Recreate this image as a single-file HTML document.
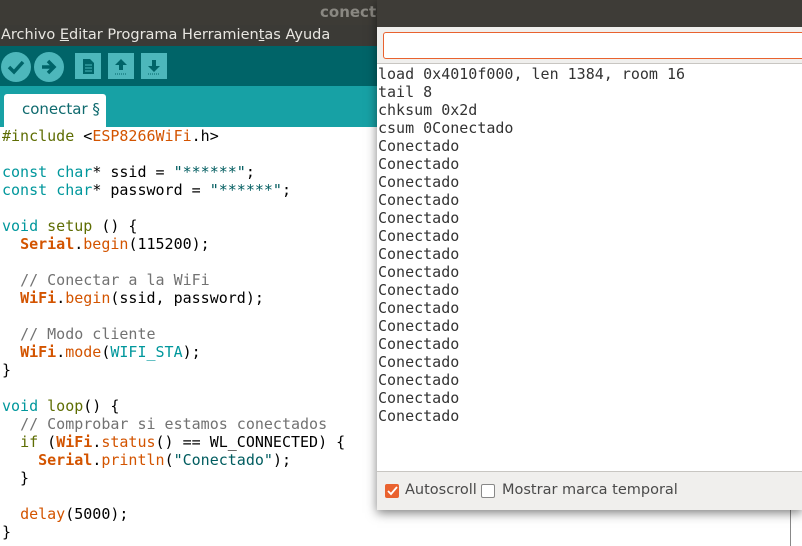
<!DOCTYPE html>
<html><head><meta charset="utf-8"><style>
*{margin:0;padding:0;box-sizing:border-box}
body{width:802px;height:546px;overflow:hidden;background:#fff;position:relative;font-family:"Liberation Sans","DejaVu Sans",sans-serif}
.abs{position:absolute}
#title{left:0;top:0;width:802px;height:25px;background:#3d3b36}
#title span{position:absolute;left:320px;top:3px;color:#8a8882;font-weight:bold;font-size:15px;font-family:"DejaVu Sans",sans-serif}
#menu{left:0;top:25px;width:802px;height:21px;background:#3b3a36;color:#e8e6e1;font-size:14.5px;font-family:"DejaVu Sans",sans-serif;padding-left:1px;line-height:21px;white-space:pre}
#tool{left:0;top:46px;width:802px;height:40px;background:#006468}
#tabs{left:0;top:86px;width:802px;height:41px;background:#17a1a5}
#tab{left:4px;top:94px;width:102px;height:33px;background:#fff;border-radius:3px 3px 0 0;color:#0f6a6e;font-size:15px;padding:6px 0 0 18px;font-family:"DejaVu Sans",sans-serif}
.circ{position:absolute;top:52px;width:30px;height:30px;border-radius:50%;background:#4db7bb}
.sq{position:absolute;top:53px;width:26px;height:26px;background:#4db7bb}
pre{font-family:"DejaVu Sans Mono","Liberation Mono",monospace;font-size:15px;line-height:18px}
#code{left:2px;top:127px;color:#000}
.k{color:#00979c}.o{color:#d35400}.b{color:#d35400;font-weight:bold}.c{color:#727272}.g{color:#5e6d03}.s{color:#005c5f}
#ser{left:377px;top:0;width:425px;height:510px;background:#f0efed;box-shadow:0 3px 10px rgba(0,0,0,.5)}
#stitle{left:0;top:0;width:425px;height:27px;background:#3e3c37}
#inp{left:6px;top:32px;width:425px;height:27px;background:#fff;border:1px solid #e9622f;border-radius:3px}
#out{left:0;top:63px;width:425px;height:409px;background:#fff;border-top:1px solid #c8c6c2;border-bottom:1px solid #c8c6c2}
#out pre{position:absolute;left:1px;top:1px;color:#333}
#bot{left:0;top:472px;height:38px;width:425px;font-size:14.5px;color:#4a4a4a;font-family:"DejaVu Sans",sans-serif}
</style></head><body>
<div id="title" class="abs"><span>conecta</span></div>
<div id="menu" class="abs">Archivo <u>E</u>ditar Programa Herramien<u>t</u>as Ayuda</div>
<div id="tool" class="abs"></div>
<div class="circ" style="left:1px"><svg width="30" height="30"><path d="M8 15l5 5 9-10" stroke="#006468" stroke-width="3.5" fill="none"/></svg></div>
<div class="circ" style="left:34px"><svg width="30" height="30"><path d="M8 15h11M14 9l6 6-6 6" stroke="#006468" stroke-width="3.5" fill="none"/></svg></div>
<div class="sq" style="left:75px"><svg width="26" height="26"><path d="M8 6h7l4 4v11H8z" fill="#006468"/><path d="M10 12h7M10 15h7M10 18h7" stroke="#4db7bb"/></svg></div>
<div class="sq" style="left:108px"><svg width="26" height="26"><path d="M13 6l6 6h-4v5h-4v-5H7z" fill="#006468"/><path d="M7 21h12" stroke="#006468" stroke-dasharray="1 1"/></svg></div>
<div class="sq" style="left:141px"><svg width="26" height="26"><path d="M13 19l6-6h-4V7h-4v6H7z" fill="#006468"/><path d="M7 21h12" stroke="#006468" stroke-dasharray="1 1"/></svg></div>
<div id="tabs" class="abs"></div>
<div id="tab" class="abs">conectar §</div>
<pre id="code" class="abs"><span class="g">#include</span> &lt;<span class="o">ESP8266WiFi</span>.h&gt;

<span class="k">const</span> <span class="k">char</span>* ssid = <span class="s">"******"</span>;
<span class="k">const</span> <span class="k">char</span>* password = <span class="s">"******"</span>;

<span class="k">void</span> <span class="g">setup</span> () {
  <span class="b">Serial</span>.<span class="o">begin</span>(115200);

  <span class="c">// Conectar a la WiFi</span>
  <span class="b">WiFi</span>.<span class="o">begin</span>(ssid, password);

  <span class="c">// Modo cliente</span>
  <span class="b">WiFi</span>.<span class="o">mode</span>(<span class="k">WIFI_STA</span>);
}

<span class="k">void</span> <span class="g">loop</span>() {
  <span class="c">// Comprobar si estamos conectados</span>
  <span class="g">if</span> (<span class="b">WiFi</span>.<span class="o">status</span>() == WL_CONNECTED) {
    <span class="b">Serial</span>.<span class="o">println</span>(<span class="s">"Conectado"</span>);
  }

  <span class="o">delay</span>(5000);
}</pre>
<div style="position:absolute;left:790px;top:510px;width:1px;height:36px;background:#888"></div>
<div id="ser" class="abs">
<div id="stitle" class="abs"></div>
<div id="inp" class="abs"></div>
<div id="out" class="abs"><pre>load 0x4010f000, len 1384, room 16
tail 8
chksum 0x2d
csum 0Conectado
Conectado
Conectado
Conectado
Conectado
Conectado
Conectado
Conectado
Conectado
Conectado
Conectado
Conectado
Conectado
Conectado
Conectado
Conectado
Conectado</pre></div>
<div id="bot" class="abs">
<div style="position:absolute;left:8px;top:12px;width:14px;height:14px;background:#e9622f;border-radius:2px"><svg width="14" height="14"><path d="M3 7l3 3 6-7" stroke="#fff" stroke-width="1.8" fill="none"/></svg></div>
<span style="position:absolute;left:28px;top:10px">Autoscroll</span>
<div style="position:absolute;left:104px;top:12px;width:14px;height:14px;border:1px solid #888;border-radius:2px;background:#fff"></div>
<span style="position:absolute;left:125px;top:10px">Mostrar marca temporal</span>
</div>
</div>
</body></html>
